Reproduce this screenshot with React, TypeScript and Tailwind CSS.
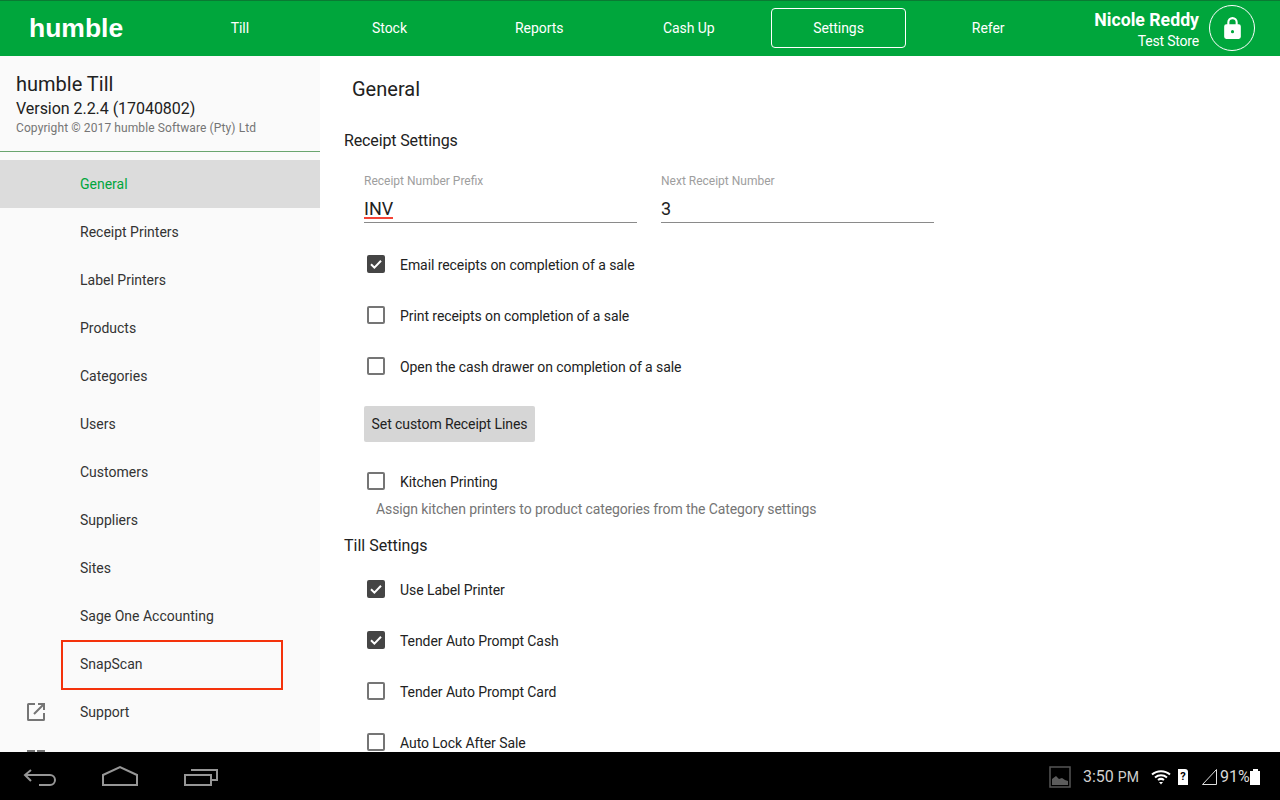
const navItems = ["Till", "Stock", "Reports", "Cash Up", "Settings", "Refer"];
const sideItems = ["General", "Receipt Printers", "Label Printers", "Products", "Categories", "Users", "Customers", "Suppliers", "Sites", "Sage One Accounting", "SnapScan"];

function Check({ label, checked, mb }: { label: string; checked?: boolean; mb: string }) {
  return (
    <div className={`flex h-[27px] items-center pl-[23px] ${mb}`}>
      <span className={`flex h-[18px] w-[18px] items-center justify-center rounded-[2px] border-2 ${checked ? "bg-[#454545] border-[#454545]" : "bg-white border-[#757575]"}`}>
        {checked && (
          <svg viewBox="0 0 18 18" className="h-[18px] w-[18px] shrink-0">
            <path d="M4 9.200l3.400 3.400L14 5.800" fill="none" stroke="#fff" strokeWidth="2" />
          </svg>
        )}
      </span>
      <span className="ml-[15px] mt-[2px] text-[14px] leading-[20px] tracking-[-0.07px] text-[#222]">{label}</span>
    </div>
  );
}

function Field({ label, value, spell }: { label: string; value: string; spell?: boolean }) {
  return (
    <div className="w-[273px]">
      <div className="h-[16px] text-[12px] leading-[16px] text-[#9e9e9e]">{label}</div>
      <div className="mt-[8px] h-[26px] border-b border-[#8a8a8a] text-[18px] leading-[24px] text-[#212121]">
        <span className={spell ? "inline-block h-[22px] border-b-2 border-[#f44336]" : ""}>{value}</span>
      </div>
    </div>
  );
}

export default function App() {
  return (
    <div className="flex h-[800px] w-[1280px] flex-col overflow-hidden bg-white font-['Roboto',sans-serif]">
      <header className="flex h-[56px] shrink-0 items-center bg-[#00a63c] text-white shadow-[inset_0_1px_0_#0a7a33]">
        <div className="w-[165px] pl-[29px] text-[26.500px] font-bold leading-[32px] font-['Liberation_Sans',sans-serif]">humble</div>
        <nav className="grid w-[898px] grid-cols-6">
          {navItems.map((n) => (
            <div key={n} className="flex h-[40px] items-center justify-center px-[7.500px]">
              <div className={`flex h-full w-full items-center justify-center text-[14px] tracking-[-0.05px] ${n === "Settings" ? "rounded-[4px] border border-white" : ""}`}>{n}</div>
            </div>
          ))}
        </nav>
        <div className="flex-1 pr-[81px] pt-[3px] text-right">
          <div className="text-[17.700px] font-bold leading-[22px] whitespace-nowrap">Nicole Reddy</div>
          <div className="text-[14px] leading-[20px] tracking-[-0.2px] whitespace-nowrap">Test Store</div>
        </div>
      </header>

      <div className="relative flex min-h-0 flex-1">
        <aside className="relative w-[320px] shrink-0 overflow-hidden bg-[#fafafa]">
          <div className="h-[96px] border-b border-[#6aa56f] pl-[16px] pt-[15px]">
            <div className="text-[20px] leading-[26px] text-[#212121]">humble Till</div>
            <div className="pt-[1px] text-[16px] leading-[22px] tracking-[-0.04px] text-[#212121]">Version 2.2.4 (17040802)</div>
            <div className="-mt-[1px] text-[12px] leading-[18px] tracking-[0.1px] text-[#757575]">Copyright © 2017 humble Software (Pty) Ltd</div>
          </div>
          <ul className="mt-[8px]">
            {sideItems.map((s) => (
              <li key={s} className={`relative flex h-[48px] items-center pl-[80px] text-[14px] ${s === "General" ? "bg-[#dcdcdc] text-[#00a63c]" : "text-[#333]"}`}>
                {s}
                {s === "SnapScan" && <span className="absolute left-[61px] top-0 h-[50px] w-[222px] border-2 border-[#f4320b]" />}
              </li>
            ))}
            <li className="flex h-[48px] items-center pl-[26px] text-[14px] text-[#333]">
              <svg viewBox="0 0 20 20" className="h-[20px] w-[20px]" fill="none" stroke="#757575" strokeWidth="2">
                <path d="M9 2H2.500A.5.5 0 0 0 2 2.500v15a.5.5 0 0 0 .5.5h15a.5.5 0 0 0 .5-.5V11" />
                <path d="M12 2h6v6M18 2L8 12" />
              </svg>
              <span className="ml-[34px]">Support</span>
            </li>
            <li className="flex h-[48px] gap-[2px] pl-[27px] pt-[14px]">
              <div className="h-[8px] w-[8px] border-2 border-[#757575]" />
              <div className="h-[8px] w-[8px] border-2 border-[#757575]" />
            </li>
          </ul>
        </aside>

        <main className="min-w-0 flex-1 overflow-hidden pl-[24px]">
          <h1 className="pl-[8px] pt-[19px] text-[20px] font-normal leading-[28px] text-[#212121]">General</h1>
          <h2 className="mt-[27px] text-[16px] font-normal leading-[22px] tracking-[-0.13px] text-[#212121]">Receipt Settings</h2>
          <div className="mt-[21px] flex gap-[24px] pl-[20px]">
            <Field label="Receipt Number Prefix" value="INV" spell />
            <Field label="Next Receipt Number" value="3" />
          </div>
          <div className="mt-[27px]">
            <Check label="Email receipts on completion of a sale" checked mb="mb-[24px]" />
            <Check label="Print receipts on completion of a sale" mb="mb-[24px]" />
            <Check label="Open the cash drawer on completion of a sale" mb="mb-[27px]" />
          </div>
          <div className="ml-[20px] flex h-[36px] w-[171px] items-center justify-center rounded-[2px] bg-[#d6d6d6] text-[14px] tracking-[-0.08px] text-[#212121]">Set custom Receipt Lines</div>
          <div className="mt-[25px]">
            <Check label="Kitchen Printing" mb="mb-[5px]" />
          </div>
          <div className="pl-[32px] text-[14px] leading-[20px] tracking-[-0.11px] text-[#757575]">Assign kitchen printers to product categories from the Category settings</div>
          <h2 className="mt-[16px] text-[16px] font-normal leading-[22px] text-[#212121]">Till Settings</h2>
          <div className="mt-[18px]">
            <Check label="Use Label Printer" checked mb="mb-[24px]" />
            <Check label="Tender Auto Prompt Cash" checked mb="mb-[24px]" />
            <Check label="Tender Auto Prompt Card" mb="mb-[24px]" />
            <Check label="Auto Lock After Sale" mb="mb-[24px]" />
          </div>
        </main>

        <div className="absolute right-[25px] top-[-51px] flex h-[46px] w-[46px] items-center justify-center rounded-full border border-white">
          <svg viewBox="0 0 24 24" className="h-[25px] w-[25px]" fill="#fff">
            <path d="M18 8h-1V6A5 5 0 0 0 7 6v2H6a2 2 0 0 0-2 2v10a2 2 0 0 0 2 2h12a2 2 0 0 0 2-2V10a2 2 0 0 0-2-2zM9 6a3 3 0 0 1 6 0v2H9zm3 10.500a1.500 1.500 0 1 1 0-3 1.500 1.500 0 0 1 0 3z" />
          </svg>
        </div>
      </div>

      <footer className="flex h-[48px] shrink-0 items-center bg-black pl-[23px] pr-[20px]">
        <svg viewBox="0 0 36 24" className="h-[24px] w-[36px]" fill="none" stroke="#969696" strokeWidth="2">
          <path d="M8 6L2 11l6 6M2 11h25a5 5 0 0 1 0 10H16" />
        </svg>
        <svg viewBox="0 0 38 24" className="ml-[42px] h-[24px] w-[38px]" fill="none" stroke="#969696" strokeWidth="2">
          <path d="M2 21V11l17-8 17 8v10z" />
        </svg>
        <svg viewBox="0 0 36 24" className="ml-[44px] h-[24px] w-[36px]" fill="none" stroke="#969696" strokeWidth="2">
          <path d="M2 11h26v10H2z" />
          <path d="M8 6h26v10h-6" />
        </svg>
        <div className="flex-1" />
        <div className="flex items-center pt-[1px]">
          <svg viewBox="0 0 22 22" className="h-[22px] w-[22px]">
            <rect x="1" y="1" width="20" height="20" fill="none" stroke="#555" strokeWidth="1.500" />
            <path d="M3 19v-6l4-3 3 3 3-1 3 2 3 1v4z" fill="#5c5c5c" />
          </svg>
          <span className="ml-[12px] w-[55px] whitespace-nowrap text-[16px] text-[#d0d0d0]">3:50 <span className="text-[14px]">PM</span></span>
          <svg viewBox="0 0 20 16" className="ml-[13px] h-[16px] w-[20px]" fill="none" stroke="#fff" strokeWidth="2">
            <path d="M1 5.500c5-4.500 13-4.500 18 0M4 8.500c3.500-3 8.500-3 12 0M7 11c2-1.500 4-1.500 6 0" />
            <path d="M10 15.500l-2-2.500h4z" fill="#fff" stroke="none" />
          </svg>
          <span className="ml-[7px] flex h-[16px] w-[10px] items-center justify-center rounded-tr-[3px] bg-white text-[11px] font-bold leading-none text-black">?</span>
          <svg viewBox="0 0 15 16" className="ml-[14px] h-[16px] w-[15px]" fill="none" stroke="#e0e0e0" strokeWidth="1">
            <path d="M.5 15.500L14.500.5v15z" />
          </svg>
          <span className="ml-[3px] w-[30px] text-[16px] leading-none text-[#d8d8d8]">91%</span>
          <span className="flex flex-col items-center">
            <span className="h-[2px] w-[5px] bg-white" />
            <span className="h-[14px] w-[10px] bg-white" />
          </span>
        </div>
      </footer>
    </div>
  );
}
